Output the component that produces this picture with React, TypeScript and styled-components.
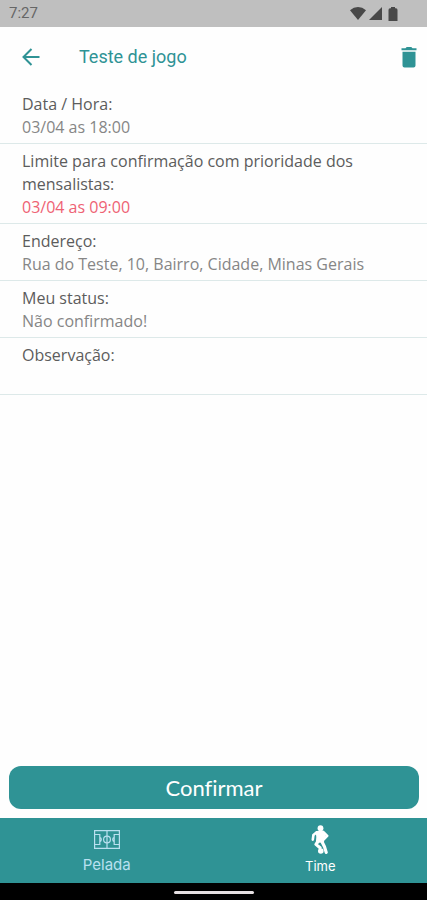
import React from "react";
import styled, { createGlobalStyle } from "styled-components";

const GlobalStyle = createGlobalStyle`
  *, *::before, *::after { box-sizing: border-box; }
  body { margin: 0; background: #fefefe; font-family: Inter, "Open Sans", sans-serif; }
  button { font: inherit; border: 0; padding: 0; cursor: pointer; background: none; }
`;

const teal = "#2f9395";

const Screen = styled.div`
  min-height: 100vh;
  display: flex;
  flex-direction: column;
`;

const StatusBar = styled.div`
  height: 27px;
  padding: 0 29px 0 9px;
  display: flex;
  align-items: center;
  justify-content: space-between;
  background: #bfbfbf;
  color: #666;
  font: 400 15px/27px Roboto, sans-serif;
`;

const StatusIcons = styled.div`
  display: flex;
  align-items: center;
  gap: 3px;
  color: #484848;

  svg { display: block; fill: currentColor; }
  svg:last-child { margin-left: 3px; }
`;

const Header = styled.header`
  height: 60px;
  padding: 0 9px 0 19px;
  display: flex;
  align-items: center;
  color: ${teal};
`;

const IconButton = styled.button`
  display: flex;
  color: inherit;

  svg { display: block; }
`;

const Title = styled.h1`
  flex: 1;
  margin: 0 0 0 36px;
  font: 400 18px/24px Roboto, sans-serif;
`;

const Details = styled.dl`
  flex: 1;
  margin: 0;
`;

const Detail = styled.div`
  padding: 6px 22px 4px;
  border-bottom: 1px solid #dde9e9;
  font-family: "Open Sans", sans-serif;
  font-size: 16px;
  line-height: 23px;
`;

const Label = styled.dt`
  font-weight: 500;
  color: #5c5c5c;
`;

const Value = styled.dd<{ $alert?: boolean }>`
  margin: 0;
  min-height: 23px;
  font-weight: 400;
  color: ${({ $alert }) => ($alert ? "#ee6274" : "#868686")};
`;

const Actions = styled.div`
  padding: 9px 8px 9px 9px;
`;

const ConfirmButton = styled.button`
  width: 100%;
  height: 43px;
  border-radius: 12px;
  background: ${teal};
  color: #fff;
  font-family: Lato, sans-serif;
  font-size: 22px;
  font-variant-ligatures: none;
  line-height: 28px;
`;

const TabBar = styled.nav`
  display: grid;
  grid-template-columns: 1fr 1fr;
  height: 65px;
  background: ${teal};
`;

const Tab = styled.button<{ $active?: boolean }>`
  display: flex;
  flex-direction: column;
  align-items: center;
  justify-content: flex-end;
  gap: ${({ $active }) => ($active ? "3px" : "7px")};
  padding-bottom: ${({ $active }) => ($active ? "8px" : "9px")};
  color: ${({ $active }) => ($active ? "#fff" : "#b9e0f0")};
  font-size: ${({ $active }) => ($active ? "13px" : "15px")};
  line-height: 18px;

  svg { display: block; }
`;

const SystemBar = styled.div`
  height: 17px;
  display: flex;
  justify-content: center;
  padding-top: 8px;
  background: #000;
`;

const HomeHandle = styled.div`
  width: 80px;
  height: 3px;
  border-radius: 2px;
  background: #e6e0e2;
`;

const details = [
  { label: "Data / Hora:", value: "03/04 as 18:00" },
  { label: "Limite para confirmação com prioridade dos mensalistas:", value: "03/04 as 09:00", alert: true },
  { label: "Endereço:", value: "Rua do Teste, 10, Bairro, Cidade, Minas Gerais" },
  { label: "Meu status:", value: "Não confirmado!" },
  { label: "Observação:", value: "" },
];

const FieldIcon = () => (
  <svg width="26" height="19" viewBox="0 0 26 19" fill="none" stroke="currentColor" strokeWidth="1.2" aria-hidden="true">
    <path d="M.6.6h24.8v17.8H.6zM13 .6v17.8M.6 4.5h5.2v10H.6M25.4 4.5h-5.2v10h5.2M5.8 7.2c2 .8 2 3.8 0 4.6M20.2 7.2c-2 .8-2 3.8 0 4.6" />
    <circle cx="13" cy="9.5" r="3.4" />
  </svg>
);

const PlayerIcon = () => (
  <svg width="18" height="29" viewBox="0 0 18 29" fill="none" stroke="currentColor" strokeLinecap="round" strokeLinejoin="round" aria-hidden="true">
    <circle cx="9.5" cy="3.2" r="2.9" fill="currentColor" stroke="none" />
    <path d="M5.6 6.8 12.2 6.4l1.6 3-1.6 7-6.4.6.4-5z" fill="currentColor" strokeWidth="1.8" />
    <path d="M5.4 7.6 2.4 10 1.8 14.6M13 7.6l3.2 3.2-3.2 3.2" strokeWidth="2.6" />
    <path d="m6.6 17-1.6 2.4 4 3.4M11 16.8l2.4 4.6 1.8 6" strokeWidth="3.2" />
    <circle cx="9.8" cy="26" r="2.8" fill="currentColor" stroke="none" />
  </svg>
);

export default function App() {
  return (
    <>
      <GlobalStyle />
      <Screen>
        <StatusBar>
          <span>7:27</span>
          <StatusIcons>
            <svg width="16" height="13" viewBox="0 0 16 13" aria-hidden="true">
              <path d="M8 13 0 3.2Q3.6 0 8 0t8 3.2z" />
            </svg>
            <svg width="13" height="13" viewBox="0 0 13 13" aria-hidden="true">
              <path d="M13 0v13H0z" />
            </svg>
            <svg width="10" height="14" viewBox="0 0 10 14" aria-hidden="true">
              <path d="M3 0h4v1.3h1Q9.5 1.3 9.5 3v11H.5V3Q.5 1.3 2 1.3h1z" />
            </svg>
          </StatusIcons>
        </StatusBar>
        <Header>
          <IconButton type="button" aria-label="Voltar">
            <svg width="24" height="24" viewBox="0 0 24 24" fill="none" stroke="currentColor" strokeWidth="2" aria-hidden="true">
              <path d="M12.5 4 4.5 12l8 8M4.5 12h16" />
            </svg>
          </IconButton>
          <Title>Teste de jogo</Title>
          <IconButton type="button" aria-label="Excluir">
            <svg width="18" height="21" viewBox="0 0 18 21" fill="currentColor" aria-hidden="true">
              <path d="M1.5 1.2h4L6.7 0h4.6l1.2 1.2h4v2h-15zM2.5 4.8h13v13.7q0 2-2 2h-9q-2 0-2-2z" />
            </svg>
          </IconButton>
        </Header>
        <Details>
          {details.map(({ label, value, alert }) => (
            <Detail key={label}>
              <Label>{label}</Label>
              <Value $alert={alert}>{value}</Value>
            </Detail>
          ))}
        </Details>
        <Actions>
          <ConfirmButton type="button">Confirmar</ConfirmButton>
        </Actions>
        <TabBar>
          <Tab type="button">
            <FieldIcon />
            Pelada
          </Tab>
          <Tab type="button" $active>
            <PlayerIcon />
            Time
          </Tab>
        </TabBar>
        <SystemBar>
          <HomeHandle />
        </SystemBar>
      </Screen>
    </>
  );
}
